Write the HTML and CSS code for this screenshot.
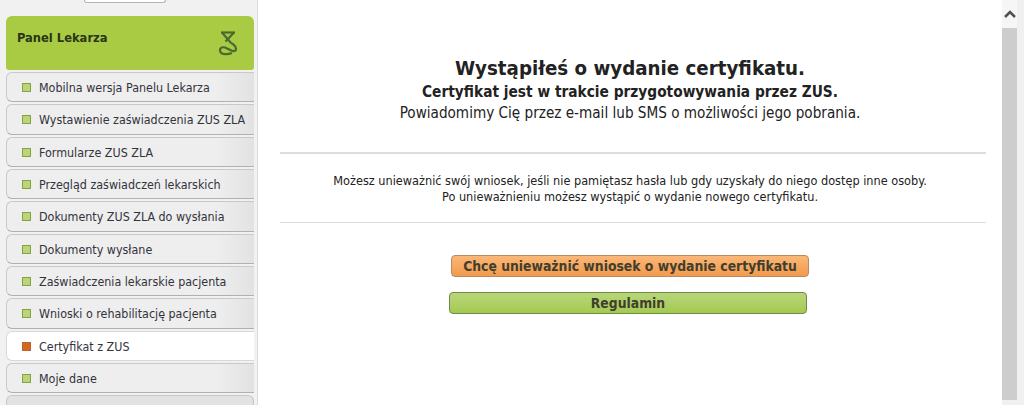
FILE: index.html
```html
<!DOCTYPE html>
<html lang="pl">
<head>
    <meta charset="UTF-8">
    <meta name="viewport" content="width=device-width, initial-scale=1.0">
    <title>Certyfikat z ZUS</title>
    <link rel="stylesheet" href="styles.css">
</head>
<body>

    <div class="sidebar">
        <div class="top-button"></div>
        <div class="panel-header">
            <span>Panel Lekarza</span>
            <svg class="panel-icon" width="20" height="26" viewBox="0 0 20 26" fill="none" stroke="#4a6b30" stroke-width="2.200">
                <path d="M3 2.500H17"/>
                <path d="M4 2.500L13 13"/>
                <path d="M16 2.500L7.500 11.500"/>
                <path d="M13 13C17 15 19 18 17.500 20.500C15 23 11 19 7 17.500C3 16.500 1 19 2.500 22C4 25 10 24.500 14 23"/>
            </svg>
        </div>
        <ul class="menu">
            <li><a href="#">Mobilna wersja Panelu Lekarza</a></li>
            <li><a href="#">Wystawienie zaświadczenia ZUS ZLA</a></li>
            <li><a href="#">Formularze ZUS ZLA</a></li>
            <li><a href="#">Przegląd zaświadczeń lekarskich</a></li>
            <li><a href="#">Dokumenty ZUS ZLA do wysłania</a></li>
            <li><a href="#">Dokumenty wysłane</a></li>
            <li><a href="#">Zaświadczenia lekarskie pacjenta</a></li>
            <li><a href="#">Wnioski o rehabilitację pacjenta</a></li>
            <li class="active"><a href="#">Certyfikat z ZUS</a></li>
            <li><a href="#">Moje dane</a></li>
            <li class="empty"></li>
        </ul>
    </div>

    <div class="content">
        <div class="message">
            <h1>Wystąpiłeś o wydanie certyfikatu.</h1>
            <h2>Certyfikat jest w trakcie przygotowywania przez ZUS.</h2>
            <p>Powiadomimy Cię przez e-mail lub SMS o możliwości jego pobrania.</p>
        </div>
        <div class="note">
            <p>Możesz unieważnić swój wniosek, jeśli nie pamiętasz hasła lub gdy uzyskały do niego dostęp inne osoby.</p>
            <p>Po unieważnieniu możesz wystąpić o wydanie nowego certyfikatu.</p>
        </div>
        <div class="actions">
            <button type="button" class="btn btn-orange">Chcę unieważnić wniosek o wydanie certyfikatu</button>
            <button type="button" class="btn btn-green">Regulamin</button>
        </div>
    </div>

    <div class="scrollbar">
        <div class="scroll-arrow">
            <svg width="12" height="8" viewBox="0 0 12 8" fill="none" stroke="#505050" stroke-width="2.500"><path d="M1 7L6 2L11 7"/></svg>
        </div>
        <div class="scroll-thumb"></div>
    </div>

</body>
</html>
```

FILE: styles.css
```css
body {
    font-family: "DejaVu Sans Condensed", "DejaVu Sans", sans-serif;
    color: #222222;
    background-color: white;
    display: flex;
    height: 405px;
    margin: 0;
    overflow: hidden;
}

/* left column */
.sidebar {
    width: 258px;
    flex-shrink: 0;
    background-color: #f1f1f1;
    border-right: 1px solid #dcdcdc;
    padding-left: 6px;
    box-sizing: border-box;
    overflow: hidden;
}

.top-button {
    width: 80px;
    height: 2px;
    margin-left: 78px;
    background-color: white;
    border: 1px solid #b5b5b5;
    border-top: none;
    border-radius: 0 0 6px 6px;
}

.panel-header {
    width: 248px;
    height: 54px;
    margin-top: 13px;
    padding: 14px 16px 0 11px;
    box-sizing: border-box;
    display: flex;
    justify-content: space-between;
    align-items: flex-start;
    background-color: #a9cb44;
    border-radius: 6px 6px 3px 3px;
    font-size: 12.800px;
    font-weight: bold;
    color: #2a3518;
}

.menu {
    list-style: none;
    margin: 2px 0 0;
    padding: 0;
    width: 248px;
}

.menu li {
    height: 28.330px;
    margin-bottom: 2px;
    background: linear-gradient(to right, #eeeeee 85%, #e2e2e2);
    border: 1px solid #c8c8c8;
    border-right: none;
    border-bottom: 1px solid #b0b0b0;
    border-radius: 6px 0 0 6px;
    display: flex;
    align-items: center;
}

.menu a {
    display: flex;
    align-items: center;
    gap: 8px;
    padding: 1px 0 0 15px;
    font-size: 12.400px;
    color: #33333b;
    text-decoration: none;
}

.menu a::before {
    content: "";
    width: 7px;
    height: 7px;
    background-color: #bcd477;
    border: 1px solid #84a345;
}

.menu .active {
    background: white;
    border-color: #d8d8d8;
}

.menu .active a::before {
    background-color: #d2691e;
    border-color: #b3662e;
}

.menu .empty {
    background: #e2e2e2;
    border-right: 1px solid #c4c4c4;
    border-radius: 6px 6px 0 0;
}

/* main part */
.content {
    flex: 1;
    padding: 0 16px 0 22px;
    text-align: center;
}

.message {
    padding: 54px 6px 28px 0;
    border-bottom: 2px solid #dddddd;
}

.message h1 {
    font-size: 20.300px;
    line-height: 28px;
    margin: 0;
}

.message h2 {
    font-size: 15.300px;
    line-height: 20px;
    margin: 0;
}

.message p {
    font-size: 15.140px;
    line-height: 22px;
    margin: 0;
}

.note {
    padding: 19px 6px 17px 0;
    border-bottom: 1px solid #dddddd;
    font-size: 12.600px;
    line-height: 16px;
}

.note p {
    margin: 0;
}

.actions {
    display: flex;
    flex-direction: column;
    align-items: center;
    padding-right: 10px;
}

.btn {
    width: 358px;
    height: 22px;
    padding: 0;
    border-radius: 4px;
    font-family: inherit;
    font-size: 13.800px;
    font-weight: bold;
    color: #3f3f2f;
    cursor: pointer;
}

.btn-orange {
    margin: 32px 0 0 4px;
    background: linear-gradient(to bottom, #fbb778, #f39a4c);
    border: 1px solid #b98a5f;
}

.btn-green {
    margin-top: 15px;
    background: linear-gradient(to bottom, #b9d67a, #a4ca52);
    border: 1px solid #6f8c44;
}

/* fake scrollbar */
.scrollbar {
    width: 22px;
    flex-shrink: 0;
    background-color: #f0f0f0;
    box-sizing: border-box;
}

.scroll-arrow {
    width: 15px;
    height: 28px;
    display: flex;
    justify-content: center;
    align-items: center;
    background-color: #f6f6f6;
}

.scroll-thumb {
    width: 15px;
    height: 372px;
    background-color: #cdcdcd;
}
```
